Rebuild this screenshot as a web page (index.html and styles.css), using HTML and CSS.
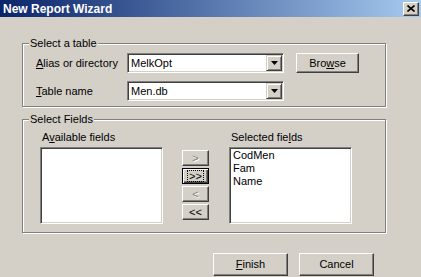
FILE: index.html
```html
<!DOCTYPE html>
<html>
<head>
<meta charset="utf-8">
<title>New Report Wizard</title>
<link rel="stylesheet" href="styles.css">
</head>
<body>
<div class="window">
  <div class="titlebar">
    <span class="title">New Report Wizard</span>
    <span class="close"><svg width="8" height="7" viewBox="0 0 8 7"><path d="M0.5 0.5 L7.5 6.5 M7.5 0.5 L0.5 6.5" stroke="#000" stroke-width="1.6"/></svg></span>
  </div>
  <div class="content">
    <fieldset class="group">
      <legend>Select a table</legend>
      <div class="table-grid">
        <span class="lbl"><u>A</u>lias or directory</span>
        <div class="combo"><span class="combo-text">MelkOpt</span><span class="combo-btn"><svg width="7" height="4" viewBox="0 0 7 4"><path d="M0 0 H7 L3.5 4 Z" fill="#000"/></svg></span></div>
        <button class="btn btn-browse">Bro<u>w</u>se</button>
        <span class="lbl"><u>T</u>able name</span>
        <div class="combo"><span class="combo-text">Men.db</span><span class="combo-btn"><svg width="7" height="4" viewBox="0 0 7 4"><path d="M0 0 H7 L3.5 4 Z" fill="#000"/></svg></span></div>
      </div>
    </fieldset>
    <fieldset class="group group-fields">
      <legend>Select Fields</legend>
      <div class="fields">
        <div class="col">
          <div class="col-label">A<u>v</u>ailable fields</div>
          <div class="listbox"></div>
        </div>
        <div class="arrows">
          <button class="abtn disabled">&gt;</button>
          <button class="abtn focused"><span class="focus">&gt;&gt;</span></button>
          <button class="abtn disabled">&lt;</button>
          <button class="abtn">&lt;&lt;</button>
        </div>
        <div class="col">
          <div class="col-label">Selected fie<u>l</u>ds</div>
          <div class="listbox">
            <div class="item">CodMen</div>
            <div class="item">Fam</div>
            <div class="item">Name</div>
          </div>
        </div>
      </div>
    </fieldset>
    <div class="footer">
      <button class="btn btn-main"><u>F</u>inish</button>
      <button class="btn btn-main">Cancel</button>
    </div>
  </div>
</div>
</body>
</html>
```

FILE: styles.css
```css
* { box-sizing: border-box; }
html, body { margin: 0; padding: 0; }
body {
  background: #d4d0c8;
  font-family: "Liberation Sans", Arial, sans-serif;
  font-size: 11px;
  color: #000;
}
.window {
  width: 421px;
  height: 277px;
  overflow: hidden;
  background: #d4d0c8;
}
.titlebar {
  height: 17px;
  display: flex;
  align-items: center;
  justify-content: space-between;
  padding: 0 2px 0 3px;
  background: linear-gradient(to right, #0a246a, #a6caf0);
}
.title {
  color: #fff;
  font-weight: bold;
  font-size: 12px;
  line-height: 14px;
}
.close {
  width: 16px;
  height: 14px;
  background: #d4d0c8;
  border: 1px solid;
  border-color: #fff #404040 #404040 #fff;
  box-shadow: inset -1px -1px #808080;
  display: flex;
  align-items: center;
  justify-content: center;
}
.close svg { display: block; }
.content {
  padding: 20px 0 0 22px;
}
.group {
  margin: 0;
  padding: 0;
  width: 364px;
  min-width: 0;
  border: 1px solid #808080;
  box-shadow: inset 1px 1px #fff, 1px 1px #fff;
}
.group legend {
  margin-left: 6px;
  padding: 0 1px;
  background: #d4d0c8;
  line-height: 13px;
}
.group-fields { margin-top: 6px; }
.table-grid {
  display: grid;
  grid-template-columns: 91px 157px 12px 63px;
  row-gap: 8px;
  align-items: center;
  padding: 3px 0 5px 13px;
}
.lbl { grid-column: 1; line-height: 13px; }
.combo {
  grid-column: 2;
  height: 20px;
  display: flex;
  align-items: center;
  background: #fff;
  border: 1px solid;
  border-color: #808080 #fff #fff #808080;
  box-shadow: inset 1px 1px #404040, inset -1px -1px #d4d0c8;
  padding: 1px 1px 1px 3px;
}
.combo-text { flex: 1; line-height: 13px; }
.combo-btn {
  width: 16px;
  height: 16px;
  background: #d4d0c8;
  border: 1px solid;
  border-color: #d4d0c8 #404040 #404040 #d4d0c8;
  box-shadow: inset 1px 1px #fff, inset -1px -1px #808080;
  display: flex;
  align-items: center;
  justify-content: center;
}
.combo-btn svg { display: block; }
.btn {
  font-family: inherit;
  font-size: 11px;
  color: #000;
  padding: 0;
  background: #d4d0c8;
  border: 1px solid;
  border-color: #fff #404040 #404040 #fff;
  box-shadow: inset -1px -1px #808080;
  line-height: 13px;
}
.btn-browse {
  grid-column: 4;
  grid-row: 1;
  width: 63px;
  height: 20px;
}
.fields {
  display: flex;
  padding: 5px 0 8px 17px;
}
.col { width: 123px; }
.col-label {
  padding-left: 2px;
  line-height: 13px;
  margin-bottom: 3px;
}
.listbox {
  height: 77px;
  background: #fff;
  border: 1px solid;
  border-color: #808080 #fff #fff #808080;
  box-shadow: inset 1px 1px #404040, inset -1px -1px #d4d0c8;
  padding: 1px 3px;
}
.item { line-height: 13px; }
.arrows {
  display: flex;
  flex-direction: column;
  gap: 2px;
  margin: 19px 20px 0 19px;
}
.abtn {
  width: 27px;
  height: 16px;
  padding: 0;
  font-family: inherit;
  font-size: 11px;
  line-height: 11px;
  color: #000;
  background: #d4d0c8;
  border: 1px solid;
  border-color: #fff #404040 #404040 #fff;
  box-shadow: inset -1px -1px #808080;
  display: flex;
  align-items: center;
  justify-content: center;
}
.abtn.disabled {
  color: #808080;
  text-shadow: 1px 1px #fff;
}
.abtn.focused {
  border-color: #000;
  box-shadow: inset 1px 1px #fff, inset -1px -1px #404040, inset -2px -2px #808080;
}
.focus {
  outline: 1px dotted #000;
  padding: 0 1px;
  line-height: 10px;
}
.footer {
  display: flex;
  gap: 11px;
  margin-top: 20px;
  padding-left: 191px;
}
.btn-main {
  width: 75px;
  height: 23px;
}
```
